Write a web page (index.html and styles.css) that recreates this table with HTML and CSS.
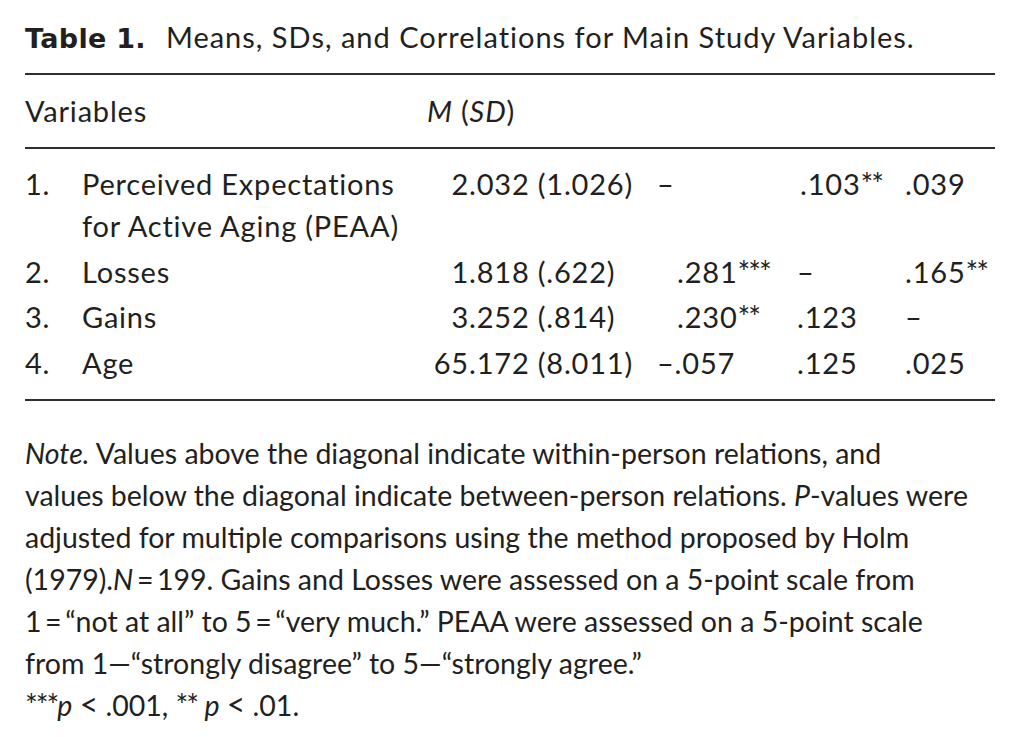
FILE: index.html
```html
<!DOCTYPE html>
<html lang="en">
<head>
<meta charset="utf-8">
<title>Table 1</title>
<link rel="stylesheet" href="styles.css">
</head>
<body>
<div class="page">
  <h1 class="caption"><span class="label-bold">Table 1.</span><span class="caption-text">Means, SDs, and Correlations for Main Study Variables.</span></h1>
  <table class="data">
    <thead>
      <tr>
        <th class="c-var">Variables</th>
        <th class="c-m"><em>M</em> (<em>SD</em>)</th>
        <th class="c-r1"></th>
        <th class="c-r2"></th>
        <th class="c-r3"></th>
      </tr>
    </thead>
    <tbody>
      <tr>
        <td class="c-var"><div class="var"><span class="num">1.</span><span class="name">Perceived Expectations<br>for Active Aging (PEAA)</span></div></td>
        <td class="c-m"><span class="int">2</span>.032 (1.026)</td>
        <td class="c-r1">–</td>
        <td class="c-r2"><span class="pos2">.103<span class="sig">**</span></span></td>
        <td class="c-r3">.039</td>
      </tr>
      <tr>
        <td class="c-var"><div class="var"><span class="num">2.</span><span class="name">Losses</span></div></td>
        <td class="c-m"><span class="int">1</span>.818 (.622)</td>
        <td class="c-r1"><span class="pos">.281<span class="sig">***</span></span></td>
        <td class="c-r2">–</td>
        <td class="c-r3">.165<span class="sig">**</span></td>
      </tr>
      <tr>
        <td class="c-var"><div class="var"><span class="num">3.</span><span class="name">Gains</span></div></td>
        <td class="c-m"><span class="int">3</span>.252 (.814)</td>
        <td class="c-r1"><span class="pos">.230<span class="sig">**</span></span></td>
        <td class="c-r2">.123</td>
        <td class="c-r3">–</td>
      </tr>
      <tr>
        <td class="c-var"><div class="var"><span class="num">4.</span><span class="name">Age</span></div></td>
        <td class="c-m"><span class="int">65</span>.172 (8.011)</td>
        <td class="c-r1">–.057</td>
        <td class="c-r2">.125</td>
        <td class="c-r3">.025</td>
      </tr>
    </tbody>
  </table>
  <p class="note"><em>Note.</em> Values above the diagonal indicate within-person relations, and<br>values below the diagonal indicate between-person relations. <em>P</em>-values were<br>adjusted for multiple comparisons using the method proposed by Holm<br>(1979).<em>N</em>&#8201;=&#8201;199. Gains and Losses were assessed on a 5-point scale from<br>1&#8201;=&#8201;“not at all” to 5&#8201;=&#8201;“very much.” PEAA were assessed on a 5-point scale<br>from 1—“strongly disagree” to 5—“strongly agree.”<br><span class="sig-n">***</span><em>p</em> <span class="lt">&lt;</span> .001, <span class="sig-n">**</span> <em>p</em> <span class="lt">&lt;</span> .01.</p>
</div>
</body>
</html>
```

FILE: styles.css
```css
html, body {
  margin: 0;
  padding: 0;
  background: #ffffff;
}

body {
  font-family: Lato, "Open Sans", "Noto Sans", sans-serif;
  color: #231f20;
  font-size: 28px;
  line-height: 42px;
}

.page {
  width: 970px;
  padding: 16px 0 0 25px;
}

.caption {
  margin: 0;
  height: 42px;
  font-size: 29px;
  font-weight: 400;
  line-height: 42px;
  white-space: nowrap;
}

.label-bold {
  font-family: "DejaVu Sans", Lato, sans-serif;
  font-weight: 700;
  font-size: 27px;
  line-height: 0;
  letter-spacing: 0.3px;
  margin-right: 20px;
}

.caption-text {
  letter-spacing: 1px;
}

.data {
  width: 970px;
  margin-top: 15px;
  border-collapse: collapse;
  table-layout: fixed;
  border-top: 2px solid #2e2e2e;
  border-bottom: 2px solid #2e2e2e;
  font-size: 29px;
  letter-spacing: 0.8px;
}

.data th,
.data td {
  padding: 2px 0 1.5px 0;
  text-align: left;
  vertical-align: top;
  font-weight: 400;
  white-space: nowrap;
  line-height: 42px;
}

.data thead th {
  padding: 15px 0 15px 0;
  border-bottom: 2px solid #2e2e2e;
}

.data tbody tr:first-child td {
  padding-top: 14px;
}

.data tbody tr:last-child td {
  padding-bottom: 15px;
}

.c-var { width: 402px; }
.c-m   { width: 230px; }
.c-r1  { width: 140px; }
.c-r2  { width: 108px; }
.c-r3  { width: 90px; }

.var {
  display: flex;
}

.num {
  width: 57px;
  flex: none;
}

.int {
  display: inline-block;
  width: 42px;
  text-align: right;
}

.pos {
  padding-left: 20px;
}

.pos2 {
  padding-left: 3px;
}

.sig,
.sig-n {
  font-size: 30px;
  letter-spacing: -2px;
  line-height: 0;
}

.lt {
  font-size: 32px;
  line-height: 0;
}

.note {
  margin: 31px 0 0 0;
  font-size: 28.5px;
  line-height: 42px;
  white-space: nowrap;
}
```
